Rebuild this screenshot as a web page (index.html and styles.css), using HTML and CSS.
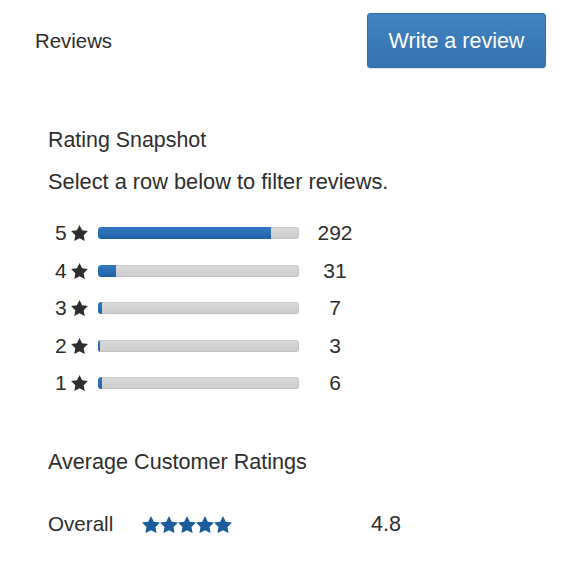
FILE: index.html
```html
<!DOCTYPE html>
<html lang="en">
<head>
<meta charset="utf-8">
<title>Reviews</title>
<link rel="stylesheet" href="styles.css">
</head>
<body>
<svg class="defs" width="0" height="0" aria-hidden="true">
  <defs>
    <path id="star" d="M12 2l3.09 6.26L22 9.27l-5 4.87 1.18 6.88L12 17.77l-6.18 3.25L7 14.14 2 9.27l6.91-1.01L12 2z"/>
  </defs>
</svg>
<header class="head">
  <h2 class="title">Reviews</h2>
  <button class="write" type="button">Write a review</button>
</header>
<section class="snapshot">
  <h3 class="sec-title">Rating Snapshot</h3>
  <p class="hint">Select a row below to filter reviews.</p>
  <ul class="hist">
    <li class="row">
      <span class="label"><span class="num">5</span><svg class="dstar" viewBox="2 2 20 19"><use href="#star"/></svg></span>
      <span class="bar"><span class="fill" style="width:86.1%"></span></span>
      <span class="count">292</span>
    </li>
    <li class="row">
      <span class="label"><span class="num">4</span><svg class="dstar" viewBox="2 2 20 19"><use href="#star"/></svg></span>
      <span class="bar"><span class="fill" style="width:9.1%"></span></span>
      <span class="count">31</span>
    </li>
    <li class="row">
      <span class="label"><span class="num">3</span><svg class="dstar" viewBox="2 2 20 19"><use href="#star"/></svg></span>
      <span class="bar"><span class="fill" style="width:2.1%"></span></span>
      <span class="count">7</span>
    </li>
    <li class="row">
      <span class="label"><span class="num">2</span><svg class="dstar" viewBox="2 2 20 19"><use href="#star"/></svg></span>
      <span class="bar"><span class="fill" style="width:0.9%"></span></span>
      <span class="count">3</span>
    </li>
    <li class="row">
      <span class="label"><span class="num">1</span><svg class="dstar" viewBox="2 2 20 19"><use href="#star"/></svg></span>
      <span class="bar"><span class="fill" style="width:1.8%"></span></span>
      <span class="count">6</span>
    </li>
  </ul>
</section>
<section class="avg">
  <h3 class="sec-title avg-title">Average Customer Ratings</h3>
  <div class="overall">
    <span class="ov-label">Overall</span>
    <svg class="bstars" viewBox="0 0 90 17" aria-label="4.8 out of 5 stars">
      <use href="#star" transform="translate(-1.8 -1.8) scale(0.9)"/>
      <use href="#star" transform="translate(16.2 -1.8) scale(0.9)"/>
      <use href="#star" transform="translate(34.2 -1.8) scale(0.9)"/>
      <use href="#star" transform="translate(52.2 -1.8) scale(0.9)"/>
      <use href="#star" transform="translate(70.2 -1.8) scale(0.9)"/>
    </svg>
    <span class="ov-value">4.8</span>
  </div>
</section>
</body>
</html>
```
FILE: styles.css
```css
html, body {
  margin: 0;
  padding: 0;
  background: #ffffff;
}
body {
  font-family: "Liberation Sans", Arial, Helvetica, sans-serif;
  font-size: 20px;
  line-height: 24px;
  color: #2e2e2e;
}
.defs {
  position: absolute;
  width: 0;
  height: 0;
}
.head {
  display: flex;
  justify-content: space-between;
  align-items: center;
  padding: 13px 34px 0 35px;
}
.title {
  margin: 0;
  font-size: 20.4px;
  font-weight: normal;
}
.write {
  height: 55px;
  width: 179px;
  padding: 0;
  border: 1px solid #336ea9;
  border-radius: 3px;
  background: linear-gradient(#4283c2, #3573b1);
  color: #ffffff;
  font-family: inherit;
  font-size: 21.5px;
  line-height: 24px;
  box-shadow: 0 1px 1px rgba(0,0,0,0.12);
}
.snapshot {
  margin-top: 60px;
  padding-left: 48px;
}
.sec-title {
  margin: 0;
  font-size: 21.4px;
  font-weight: normal;
  line-height: 24px;
}
.avg-title {
  font-size: 21.6px;
}
.hint {
  margin: 17.5px 0 0;
  font-size: 21.8px;
}
.hist {
  list-style: none;
  margin: 21px 0 0;
  padding: 0;
}
.row {
  display: flex;
  align-items: center;
  height: 37.5px;
  font-size: 21px;
}
.label {
  display: flex;
  align-items: center;
  padding-left: 7px;
  width: 43px;
}
.num {
  width: 11px;
}
.dstar {
  width: 17px;
  height: 16px;
  margin-left: 4.5px;
  fill: #2e2e2e;
}
.bar {
  display: block;
  width: 201px;
  height: 12px;
  border-radius: 3px;
  background: linear-gradient(#d9d9d9, #cdcdcd);
  box-shadow: inset 0 0 0 1px rgba(0,0,0,0.05);
  overflow: hidden;
}
.fill {
  display: block;
  height: 100%;
  min-width: 2px;
  border-radius: 3px 0 0 3px;
  background: linear-gradient(#3479c0, #1f62a6);
}
.count {
  width: 60px;
  margin-left: 6px;
  text-align: center;
}
.avg {
  margin-top: 48px;
  padding-left: 48px;
}
.overall {
  display: flex;
  align-items: center;
  margin-top: 38px;
  font-size: 20.6px;
}
.ov-label {
  width: 94px;
}
.bstars {
  width: 90px;
  height: 17px;
  fill: #1a5c9c;
}
.ov-value {
  margin-left: 139px;
  font-size: 21.6px;
}
```
